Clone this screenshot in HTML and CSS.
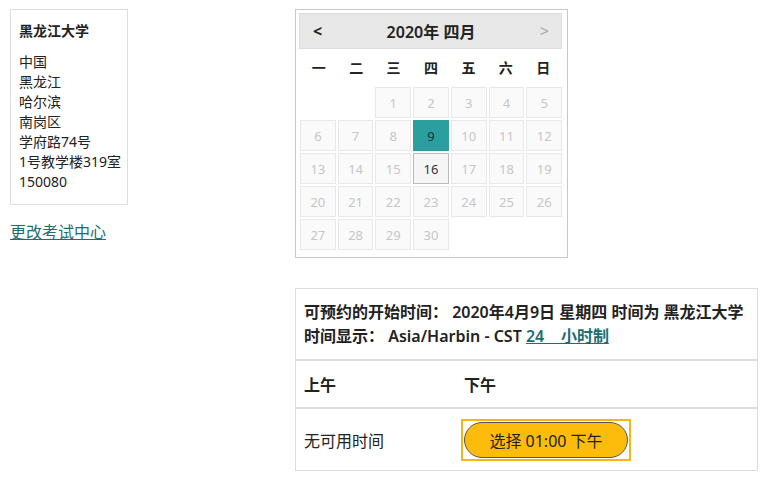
FILE: index.html
```html
<!DOCTYPE html>
<html lang="zh">
<head>
<meta charset="utf-8">
<link rel="stylesheet" href="styles.css">
</head>
<body>
<div class="page">
  <div class="left">
    <div class="card">
      <div class="card-title">黑龙江大学</div>
      <div class="addr">
        <div>中国</div>
        <div>黑龙江</div>
        <div>哈尔滨</div>
        <div>南岗区</div>
        <div>学府路74号</div>
        <div>1号教学楼319室</div>
        <div>150080</div>
      </div>
    </div>
    <a class="change" href="#">更改考试中心</a>
  </div>
  <div class="right">
    <div class="cal">
      <div class="cal-head">
        <span class="nav prev">&lt;</span>
        <span class="cal-title">2020年 四月</span>
        <span class="nav next">&gt;</span>
      </div>
      <div class="wk">
        <span>一</span><span>二</span><span>三</span><span>四</span><span>五</span><span>六</span><span>日</span>
      </div>
      <div class="days">
        <span class="empty"></span><span class="empty"></span>
        <span class="d">1</span><span class="d">2</span><span class="d">3</span><span class="d">4</span><span class="d">5</span>
        <span class="d">6</span><span class="d">7</span><span class="d">8</span><span class="d sel">9</span><span class="d">10</span><span class="d">11</span><span class="d">12</span>
        <span class="d">13</span><span class="d">14</span><span class="d">15</span><span class="d avail">16</span><span class="d">17</span><span class="d">18</span><span class="d">19</span>
        <span class="d">20</span><span class="d">21</span><span class="d">22</span><span class="d">23</span><span class="d">24</span><span class="d">25</span><span class="d">26</span>
        <span class="d">27</span><span class="d">28</span><span class="d">29</span><span class="d">30</span>
      </div>
    </div>
    <div class="panel">
      <div class="panel-head">
        <div>可预约的开始时间： 2020年4月9日 星期四 时间为 黑龙江大学</div>
        <div>时间显示： Asia/Harbin - CST <a class="fmt" href="#">24&nbsp;&nbsp;&nbsp;&nbsp;小时制</a></div>
      </div>
      <div class="row row-head">
        <div class="c1">上午</div>
        <div class="c2">下午</div>
      </div>
      <div class="row row-body">
        <div class="c1">无可用时间</div>
        <div class="c2"><span class="focus"><button class="slot">选择 01:00 下午</button></span></div>
      </div>
    </div>
  </div>
</div>
</body>
</html>
```
FILE: styles.css
```css
* { box-sizing: border-box; }
body {
  margin: 0;
  font-family: "Noto Sans", "Noto Sans CJK SC", sans-serif;
  color: #222;
  background: #fff;
}
.page {
  display: grid;
  grid-template-columns: 285px 463px;
  padding: 9px 0 0 10px;
}
.card {
  width: 118px;
  border: 1px solid #ddd;
  padding: 11px 4px 12px 8px;
  font-size: 14px;
  line-height: 20px;
  white-space: nowrap;
}
.card-title {
  font-weight: 700;
  margin-bottom: 11px;
}
.change {
  display: inline-block;
  margin-top: 17px;
  font-size: 16px;
  line-height: 20px;
  color: #1d6e72;
  text-decoration: underline;
}
.cal {
  width: 273px;
  border: 1px solid #c8c8c8;
  padding: 3px 5px 7px 3px;
}
.cal-head {
  height: 36px;
  background: #e8e8e8;
  border: 1px solid #dcdcdc;
  display: flex;
  align-items: center;
  justify-content: space-between;
  padding: 0 12px 0 13px;
}
.nav { font-size: 16px; font-weight: 700; }
.prev { color: #222; }
.next { color: #aaa; font-weight: 400; }
.cal-title { font-size: 16px; font-weight: 600; }
.wk {
  display: grid;
  grid-template-columns: repeat(7, 1fr);
  height: 36px;
  align-items: center;
  text-align: center;
  font-size: 14px;
  font-weight: 700;
  margin-left: 1px;
}
.days {
  display: grid;
  grid-template-columns: repeat(7, 1fr);
  grid-auto-rows: 31px;
  gap: 2px;
  margin-top: 2px;
  margin-left: 1px;
}
.d {
  display: flex;
  align-items: center;
  justify-content: center;
  background: #fafafa;
  border: 1px solid #e8e8e8;
  color: #c6c6c6;
  font-size: 13px;
}
.d.sel {
  background: #2b9ea0;
  border-color: #2b9ea0;
  color: #14393a;
}
.d.avail {
  background: #f5f5f5;
  border-color: #bcbcbc;
  color: #333;
}
.panel {
  margin-top: 30px;
  width: 463px;
  border: 1px solid #dcdcdc;
}
.panel-head {
  padding: 11px 8px 11px 8px;
  font-size: 16px;
  font-weight: 600;
  line-height: 24px;
  border-bottom: 2px solid #dcdcdc;
}
.fmt { color: #1d6e72; text-decoration: underline; }
.row {
  display: grid;
  grid-template-columns: 160px 1fr;
  align-items: center;
}
.row > div { padding-left: 8px; }
.row-head {
  height: 48px;
  font-size: 16px;
  font-weight: 700;
  border-bottom: 2px solid #dcdcdc;
}
.row-body {
  height: 61px;
  font-size: 16px;
}
.row-body .c2 { padding-left: 5px; }
.focus {
  display: inline-block;
  border: 2px solid #f8b417;
  padding: 1px;
  margin-top: 1px;
  background: #fff;
}
.slot {
  display: block;
  width: 164px;
  height: 36px;
  background: #fdbc0b;
  border: 1px solid #555;
  border-radius: 18px;
  font-family: inherit;
  font-size: 16px;
  color: #222;
  padding: 0;
}
```
